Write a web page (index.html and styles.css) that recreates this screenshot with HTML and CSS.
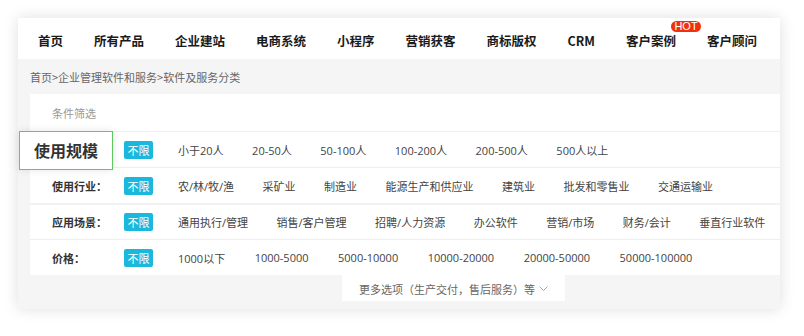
FILE: index.html
```html
<!DOCTYPE html>
<html>
	<head>
		<meta charset="UTF-8">
		<title>软件及服务分类</title>
		<link rel="stylesheet" href="styles.css">
	</head>
	<body>
		<div class="card">
			<ul class="nav">
				<li>首页</li>
				<li>所有产品</li>
				<li>企业建站</li>
				<li>电商系统</li>
				<li>小程序</li>
				<li>营销获客</li>
				<li>商标版权</li>
				<li>CRM</li>
				<li class="hot">客户案例<span class="badge">HOT</span></li>
				<li>客户顾问</li>
			</ul>
			<div class="main">
				<div class="crumb">首页&gt;企业管理软件和服务&gt;软件及服务分类</div>
				<div class="panel">
					<div class="title">条件筛选</div>
					<div class="row">
						<span class="label"></span>
						<span class="tag">不限</span>
						<span class="opt">小于20人</span>
						<span class="opt">20-50人</span>
						<span class="opt">50-100人</span>
						<span class="opt">100-200人</span>
						<span class="opt">200-500人</span>
						<span class="opt">500人以上</span>
					</div>
					<div class="row">
						<span class="label">使用行业：</span>
						<span class="tag">不限</span>
						<span class="opt">农/林/牧/渔</span>
						<span class="opt">采矿业</span>
						<span class="opt">制造业</span>
						<span class="opt">能源生产和供应业</span>
						<span class="opt">建筑业</span>
						<span class="opt">批发和零售业</span>
						<span class="opt">交通运输业</span>
					</div>
					<div class="row thick">
						<span class="label">应用场景：</span>
						<span class="tag">不限</span>
						<span class="opt">通用执行/管理</span>
						<span class="opt">销售/客户管理</span>
						<span class="opt">招聘/人力资源</span>
						<span class="opt">办公软件</span>
						<span class="opt">营销/市场</span>
						<span class="opt">财务/会计</span>
						<span class="opt">垂直行业软件</span>
					</div>
					<div class="row nums">
						<span class="label">价格：</span>
						<span class="tag">不限</span>
						<span class="opt">1000以下</span>
						<span class="opt">1000-5000</span>
						<span class="opt">5000-10000</span>
						<span class="opt">10000-20000</span>
						<span class="opt">20000-50000</span>
						<span class="opt">50000-100000</span>
					</div>
				</div>
				<div class="more">更多选项（生产交付，售后服务）等
					<svg width="9" height="6" viewBox="0 0 9 6"><polyline points="0.5,0.5 4.5,4.5 8.5,0.5" fill="none" stroke="#aaa" stroke-width="1"/></svg>
				</div>
			</div>
			<div class="callout">使用规模</div>
		</div>
	</body>
</html>
```

FILE: styles.css
```css
* {
	margin: 0;
	padding: 0;
	box-sizing: border-box;
}
body {
	padding: 18px;
	background-color: #fff;
	font-family: "Microsoft YaHei", "Noto Sans CJK SC", sans-serif;
	font-size: 11px;
	color: #333;
}
.card {
	position: relative;
	width: 762px;
	background-color: #fff;
	box-shadow: 0 0 14px rgba(0, 0, 0, 0.13);
}
.nav {
	display: flex;
	align-items: center;
	height: 41px;
	padding: 4px 0 0 20px;
	list-style: none;
	font-size: 12.5px;
	font-weight: bold;
	color: #1a1a1a;
	white-space: nowrap;
}
.nav li {
	flex-shrink: 0;
	margin-right: 31px;
	line-height: 17px;
}
.nav .hot {
	position: relative;
}
.badge {
	position: absolute;
	left: 45px;
	top: -11px;
	width: 30px;
	height: 11px;
	border-radius: 6px;
	background-color: #f0310e;
	color: #fff;
	font-family: "Liberation Sans", sans-serif;
	font-size: 11px;
	font-weight: normal;
	line-height: 11px;
	text-align: center;
}
.main {
	background-color: #f5f5f5;
	padding: 0 0 8px 12px;
}
.crumb {
	height: 35px;
	line-height: 36px;
	color: #666;
}
.panel {
	background-color: #fff;
}
.title {
	height: 37px;
	line-height: 38px;
	padding-left: 22px;
	color: #999;
}
.row {
	display: flex;
	align-items: center;
	height: 36px;
	padding-left: 22px;
	border-top: 1px solid #eee;
	white-space: nowrap;
}
.row.thick {
	border-top: 2px solid #f2f2f2;
}
.label {
	flex-shrink: 0;
	width: 72px;
	font-weight: bold;
	color: #333;
}
.tag {
	flex-shrink: 0;
	width: 29px;
	height: 18px;
	line-height: 18px;
	margin-right: 25px;
	border-radius: 2px;
	background-color: #1bb8dd;
	color: #fff;
	text-align: center;
}
.opt {
	flex-shrink: 0;
	margin-right: 28.5px;
	font-family: "Open Sans", "Noto Sans CJK SC", sans-serif;
	color: #444;
}
.nums .opt {
	margin-right: 29.5px;
}
.more {
	display: flex;
	align-items: center;
	justify-content: center;
	gap: 4px;
	width: 223px;
	height: 26px;
	margin-left: 312px;
	padding-top: 1px;
	background-color: #fff;
	color: #666;
}
.callout {
	position: absolute;
	left: 1px;
	top: 113px;
	width: 94px;
	height: 39px;
	line-height: 37px;
	border: 1px solid #5ec95e;
	background-color: #fff;
	box-shadow: 0 0 8px rgba(0, 0, 0, 0.1);
	font-size: 16px;
	font-weight: bold;
	color: #333;
	text-align: center;
}
```
